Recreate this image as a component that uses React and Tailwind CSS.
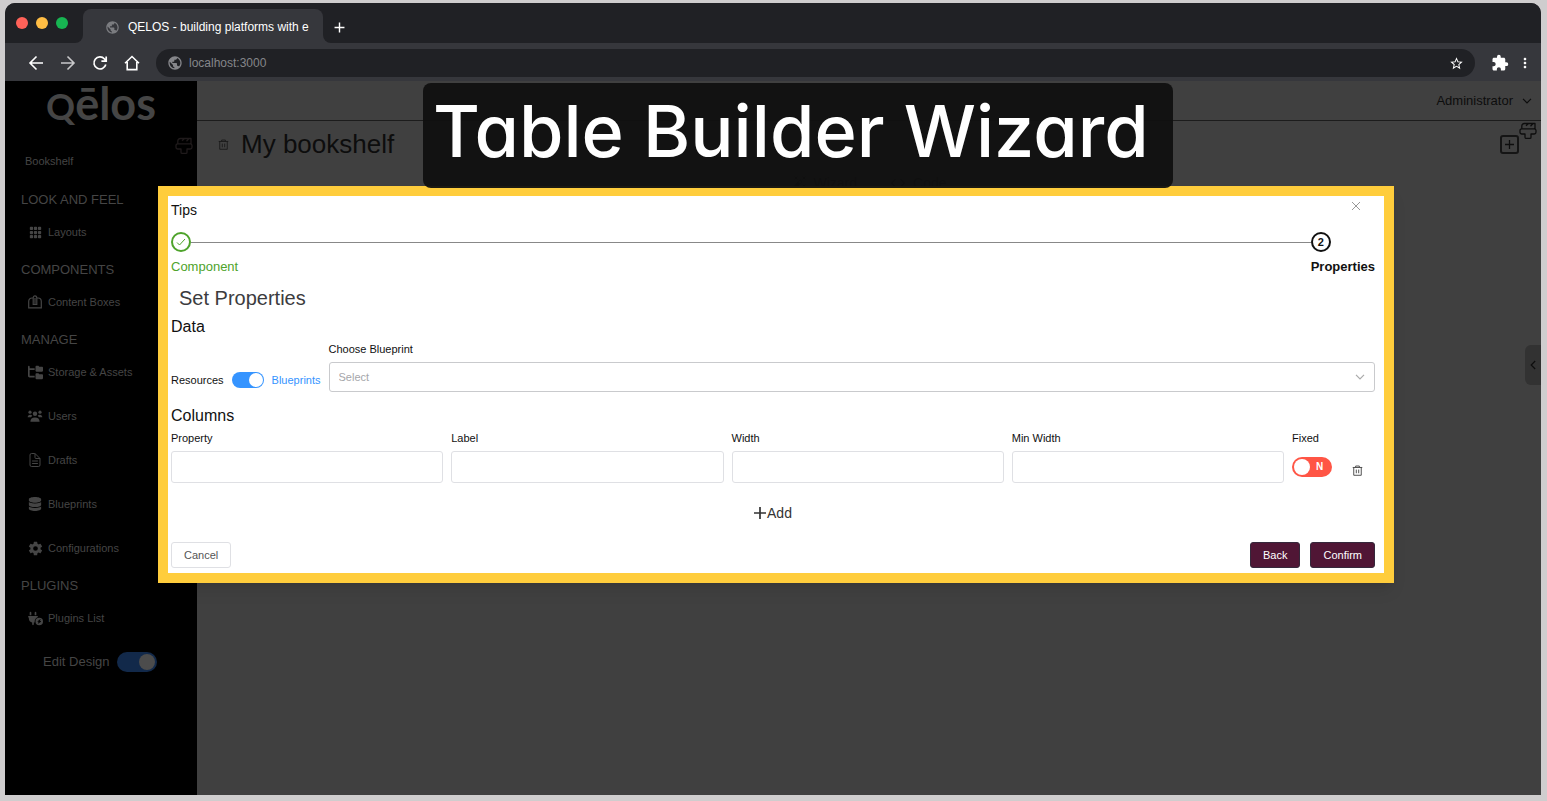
import { FaFolderTree, FaPlugCircleBolt, FaDatabase } from "react-icons/fa6";
import { BsGrid3X3GapFill } from "react-icons/bs";
import { IoDocumentTextOutline, IoSettingsSharp } from "react-icons/io5";
import { MdPublic, MdExtension, MdMoreVert, MdStarBorder, MdAdd, MdCode, MdAutoFixHigh } from "react-icons/md";

const HomeIcon = () => (
  <svg viewBox="0 0 16 16" className="size-4" fill="none" stroke="currentColor" strokeWidth="1.6">
    <path d="M1 8.3 8 1.5l7 6.8M3.2 7v7.6h9.6V7" />
  </svg>
);

const ArrowIcon = ({ className }) => (
  <svg viewBox="0 0 16 16" className={className} fill="none" stroke="currentColor" strokeWidth="1.600">
    <path d="M15 8H2M8.500 1.500 2 8l6.500 6.500" />
  </svg>
);

const ReloadIcon = () => (
  <svg viewBox="0 0 16 16" className="size-4" fill="none" stroke="currentColor" strokeWidth="1.700">
    <path d="M13.800 9.500A6 6 0 1 1 12.500 4L14 5.800M14.200 1.500v4.700H9.400" />
  </svg>
);

const UsersIcon = () => (
  <svg viewBox="0 0 16 14" className="h-3.5 w-4" fill="currentColor">
    <circle cx="3" cy="3.2" r="1.6" />
    <circle cx="13" cy="3.2" r="1.6" />
    <circle cx="8" cy="4.8" r="2.2" />
    <path d="M.7 8.2c0-1.600 1-2.500 2.400-2.500 1 0 1.700.4 2.200 1.100L4 8.200zM15.300 8.200c0-1.600-1-2.500-2.400-2.500-1 0-1.700.4-2.200 1.100L12 8.200zM3.400 12.700c0-2.600 1.600-4.200 4.600-4.200s4.600 1.600 4.600 4.200z" />
  </svg>
);

const BoxIcon = () => (
  <svg viewBox="0 0 16 16" className="size-4" fill="none" stroke="currentColor" strokeWidth="1.200">
    <path d="M6.200 4H5C3.200 4 1.700 5.200 1.700 7.500v6.300h12.600V7.500C14.300 5.200 12.800 4 11 4H9.800M6.200 10.500V4.200C6.200 2.600 7 1.800 8 1.800s1.800.8 1.800 2.400v6.300zM8 4v6.500" />
  </svg>
);

const TrashIcon = ({ className }) => (
  <svg viewBox="0 0 12 12" className={className} fill="none" stroke="currentColor" strokeWidth="1">
    <path d="M.8 2.700h10.400M4 2.500V1.100h4v1.400M1.900 2.700v8.500h8.200V2.700M4.700 5v4M7.300 5v4" />
  </svg>
);

const BrushIcon = () => (
  <svg viewBox="0 0 18 18" className="size-[18px]" fill="none" stroke="currentColor" strokeWidth="1.300" strokeLinejoin="round">
    <path d="M2.800 6.800V4c0-1.500 1-2.500 2.500-2.500H16v5.300M9.500 1.500 7 3.800M14 1.500l-2.500 2.800M2.800 6.800h12.400c1 0 1.800.7 1.800 1.700v1.700c0 1-.8 1.800-1.800 1.800H12v3.200c0 .7-.5 1.200-1.200 1.200H7.200c-.7 0-1.200-.5-1.200-1.200V12H2.800C1.800 12 1 11.200 1 10.200V8.500c0-1 .8-1.700 1.800-1.700z" />
  </svg>
);

const PlusIcon = ({ className }) => (
  <svg viewBox="0 0 12 12" className={className} fill="none" stroke="currentColor" strokeWidth="1.700">
    <path d="M6 0v12M0 6h12" />
  </svg>
);

const Chevron = ({ className }) => (
  <svg viewBox="0 0 10 6" className={className} fill="none" stroke="currentColor" strokeWidth="1.200">
    <path d="m1 .8 4 4 4-4" />
  </svg>
);

const sections = [
  { title: "LOOK AND FEEL", items: [["Layouts", <BsGrid3X3GapFill key="i" size={13} />]] },
  { title: "COMPONENTS", items: [["Content Boxes", <BoxIcon key="i" />]] },
  {
    title: "MANAGE",
    items: [
      ["Storage & Assets", <FaFolderTree key="i" size={15} />],
      ["Users", <UsersIcon key="i" />],
      ["Drafts", <IoDocumentTextOutline key="i" size={16} />],
      ["Blueprints", <FaDatabase key="i" size={14} />],
      ["Configurations", <IoSettingsSharp key="i" size={15} />],
    ],
  },
  { title: "PLUGINS", items: [["Plugins List", <FaPlugCircleBolt key="i" size={15} />]] },
];

function BrowserChrome() {
  return (
    <header className="shrink-0 text-white">
      <div className="flex h-10 items-end bg-[#36373c]">
        <div className="flex h-10 items-center gap-2 rounded-br-lg bg-[#202125] pr-[15px] pl-[11px]">
          <span className="size-3 rounded-full bg-[#ff6259]" />
          <span className="size-3 rounded-full bg-[#ffbd44]" />
          <span className="size-3 rounded-full bg-[#17b552]" />
        </div>
        <div className="flex h-10 items-end bg-[#202125]">
          <div className="flex h-[34px] w-60 items-center gap-2 rounded-t-lg bg-[#36373c] pt-0.5 pl-[22px] text-[12px]">
            <MdPublic size={15} className="shrink-0 text-[#7b7c80]" />
            <span className="whitespace-nowrap">QELOS - building platforms with e</span>
          </div>
        </div>
        <div className="flex h-10 flex-1 items-end rounded-bl-lg bg-[#202125]">
          <button aria-label="New tab" className="ml-2 flex h-8 items-center">
            <MdAdd size={17} />
          </button>
        </div>
      </div>
      <div className="flex h-[38px] items-center bg-[#36373c] pt-0.5 pr-2 pl-[23px]">
        <nav className="flex items-center gap-4">
          <button aria-label="Back to previous page"><ArrowIcon className="size-4" /></button>
          <button aria-label="Forward" className="text-[#c8c8ca]"><ArrowIcon className="size-4 rotate-180" /></button>
          <button aria-label="Reload"><ReloadIcon /></button>
          <button aria-label="Home"><HomeIcon /></button>
        </nav>
        <div className="ml-4 flex h-7 flex-1 items-center gap-1.5 rounded-full bg-[#202125] px-[11px]">
          <MdPublic size={16} className="text-[#85868a]" />
          <input aria-label="Address" defaultValue="localhost:3000" className="min-w-0 flex-1 bg-transparent text-[12px] text-[#85868a] outline-none" />
          <button aria-label="Bookmark"><MdStarBorder size={15} /></button>
        </div>
        <div className="ml-4 flex items-center gap-2">
          <button aria-label="Extensions"><MdExtension size={18} /></button>
          <button aria-label="More" className="flex w-4 justify-center"><MdMoreVert size={18} /></button>
        </div>
      </div>
    </header>
  );
}

function Sidebar() {
  return (
    <aside className="relative w-48 shrink-0 bg-black text-[#454545]">
      <div className="flex h-[52px] items-baseline justify-center font-[Lato,sans-serif] text-[45px] leading-[44px] font-bold">
        <span className="text-[36px]">Q</span>ēlos
      </div>
      <span className="absolute top-14 right-1 text-[#1f1a1b]"><BrushIcon /></span>
      <a href="#bookshelf" className="mt-4 ml-5 block h-[25px] text-[11px] leading-6">Bookshelf</a>
      {sections.map((s) => (
        <section key={s.title} className="mt-[14px]">
          <h2 className="ml-4 h-6 text-[13px] leading-6">{s.title}</h2>
          <ul className="flex flex-col gap-5 pt-2">
            {s.items.map(([label, icon]) => (
              <li key={label}>
                <a href="#item" className="ml-[22px] flex h-6 items-center gap-[5px] text-[11px]">
                  <span className="flex w-4 justify-center">{icon}</span>
                  {label}
                </a>
              </li>
            ))}
          </ul>
        </section>
      ))}
      <label className="mt-5 ml-[38px] flex h-6 items-center gap-2 text-[13px]">
        Edit Design
        <input type="checkbox" defaultChecked className="sr-only" />
        <span className="flex h-5 w-10 items-center justify-end rounded-full bg-[#12294a] p-0.5">
          <span className="size-4 rounded-full bg-[#4c4c4c]" />
        </span>
      </label>
    </aside>
  );
}

function Page() {
  return (
    <main className="relative min-w-0 flex-1 bg-[#404040] text-[#0d0d0d]">
      <div className="flex h-10 items-center justify-end border-b border-[#1c1c1c] pr-[9px]">
        <button className="flex items-center gap-[9px] text-[13px]">
          Administrator
          <Chevron className="h-1.5 w-2.5" />
        </button>
      </div>
      <div className="flex h-[46px] items-center gap-3 pr-[22px] pl-[21px]">
        <TrashIcon className="size-[11px] text-[#1a1a1a]" />
        <h1 className="flex-1 text-[26px]">My bookshelf</h1>
        <button aria-label="Add block" className="flex size-[19px] items-center justify-center rounded-[3px] border-2 border-[#151515]">
          <PlusIcon className="size-[9px]" />
        </button>
      </div>
      <div className="flex h-8 items-center justify-center gap-8 text-[14px]">
        <button className="flex items-center gap-1.5"><MdAutoFixHigh size={16} />Wizard</button>
        <button className="flex items-center gap-1.5"><MdCode size={18} />Code</button>
      </div>
      <span className="absolute top-[41px] right-1"><BrushIcon /></span>
      <button aria-label="Open panel" className="absolute top-[264px] right-0 flex h-10 w-4 items-center justify-center rounded-l-md bg-[#323232]">
        <Chevron className="h-1.5 w-2.5 rotate-90" />
      </button>
    </main>
  );
}

function Dialog() {
  return (
    <div role="dialog" aria-label="Set Properties" className="absolute top-[186px] right-[153px] left-[158px] border-10 border-[#ffcd3c] bg-white px-[3px] pt-[3px] pb-[5px] text-[#111] shadow-lg">
      <div className="pr-[6px]">
        <div className="flex h-6 items-start justify-between">
          <p className="text-[14px] leading-[22px]">Tips</p>
          <button aria-label="Close" className="mr-[14px] text-[#999]">
            <svg viewBox="0 0 10 10" className="mt-0.5 size-2.5" stroke="currentColor"><path d="m1 1 8 8M9 1 1 9" /></svg>
          </button>
        </div>
        <ol className="mt-[9px] flex text-[13px]">
          <li className="flex-1 text-[#4ea32b]">
            <div className="flex items-center">
              <span className="flex size-5 items-center justify-center rounded-full border-2 border-current">
                <svg viewBox="0 0 10 10" className="size-2.5" fill="none" stroke="currentColor"><path d="m1 5.500 2.500 2.500L9 2" /></svg>
              </span>
              <span className="h-px flex-1 bg-[#888]" />
            </div>
            <p className="mt-[5px] leading-5">Component</p>
          </li>
          <li className="font-bold">
            <span className="flex size-5 items-center justify-center rounded-full border-2 border-current text-[11px]">2</span>
            <p className="mt-[5px] leading-5">Properties</p>
          </li>
        </ol>
        <h2 className="mt-2 ml-2 h-[26px] text-[20px] leading-[26px] text-[#3c3c3e]">Set Properties</h2>
        <h3 className="mt-1 text-[16px] leading-6">Data</h3>
        <div className="flex items-end gap-2 text-[11px]">
          <label className="flex h-6 items-center gap-2">
            Resources
            <input type="checkbox" defaultChecked className="sr-only" />
            <span className="flex h-4 w-8 items-center justify-end rounded-full bg-[#3594ff] p-px">
              <span className="size-3.5 rounded-full bg-white" />
            </span>
            <span className="text-[#3594ff]">Blueprints</span>
          </label>
          <div className="flex-1">
            <label htmlFor="blueprint" className="block leading-5">Choose Blueprint</label>
            <div className="relative mt-[3px]">
              <select id="blueprint" className="block h-[30px] w-full appearance-none rounded-[3px] border border-[#c9cacd] bg-white pl-[9px] text-[11px] text-[#a5a6aa]">
                <option>Select</option>
              </select>
              <Chevron className="pointer-events-none absolute top-3 right-[10px] h-1.5 w-2.5 text-[#aaa]" />
            </div>
          </div>
        </div>
        <h3 className="mt-3 text-[16px] leading-6">Columns</h3>
        <div className="flex gap-2 text-[11px]">
          {["Property", "Label", "Width", "Min Width"].map((name) => (
            <label key={name} className="flex-1 leading-5">
              {name}
              <input className="mt-[3px] block h-8 w-full rounded-[3px] border border-[#dfe0e4] px-2" />
            </label>
          ))}
          <div className="flex w-[83px] justify-between pr-3">
            <label className="leading-5">
              Fixed
              <input type="checkbox" className="sr-only" />
              <span className="mt-[9px] flex h-5 w-10 items-center gap-1.5 rounded-full bg-[#ff5545] p-0.5 text-[10px] font-bold text-white">
                <span className="size-4 rounded-full bg-white" />N
              </span>
            </label>
            <button aria-label="Delete column" className="mt-[30px] h-6 text-[#444]"><TrashIcon className="size-[11px]" /></button>
          </div>
        </div>
        <div className="mt-[18px] flex justify-center">
          <button className="flex h-6 items-center gap-px text-[14px] text-[#333]"><PlusIcon className="size-3" />Add</button>
        </div>
        <footer className="mt-[17px] flex items-center justify-between text-[11px]">
          <button className="h-[26px] rounded-[3px] border border-[#dfe0e4] px-3 text-[#555]">Cancel</button>
          <div className="flex gap-[10px] text-white">
            <button className="h-[26px] rounded-[3px] border border-[#35283b] bg-[#501635] px-3">Back</button>
            <button className="h-[26px] rounded-[3px] border border-[#35283b] bg-[#501635] px-3">Confirm</button>
          </div>
        </footer>
      </div>
    </div>
  );
}

export default function App() {
  return (
    <div className="relative flex h-screen flex-col bg-[#cfcdce] pt-[3px] pr-[6px] pb-[6px] pl-[5px] font-['Liberation_Sans',Arial,sans-serif]">
      <div className="flex min-h-0 flex-1 flex-col overflow-hidden rounded-t-[10px]">
        <BrowserChrome />
        <div className="flex min-h-0 flex-1">
          <Sidebar />
          <Page />
        </div>
      </div>
      <Dialog />
      <div className="absolute top-[83px] left-[423px] h-[105px] rounded-lg bg-[#101010]/95 pr-6 pl-[10px] font-[Inter,sans-serif] text-[72px] leading-[96px] font-medium whitespace-nowrap text-white [font-feature-settings:'cv11']">
        Table Builder Wizard
      </div>
    </div>
  );
}
